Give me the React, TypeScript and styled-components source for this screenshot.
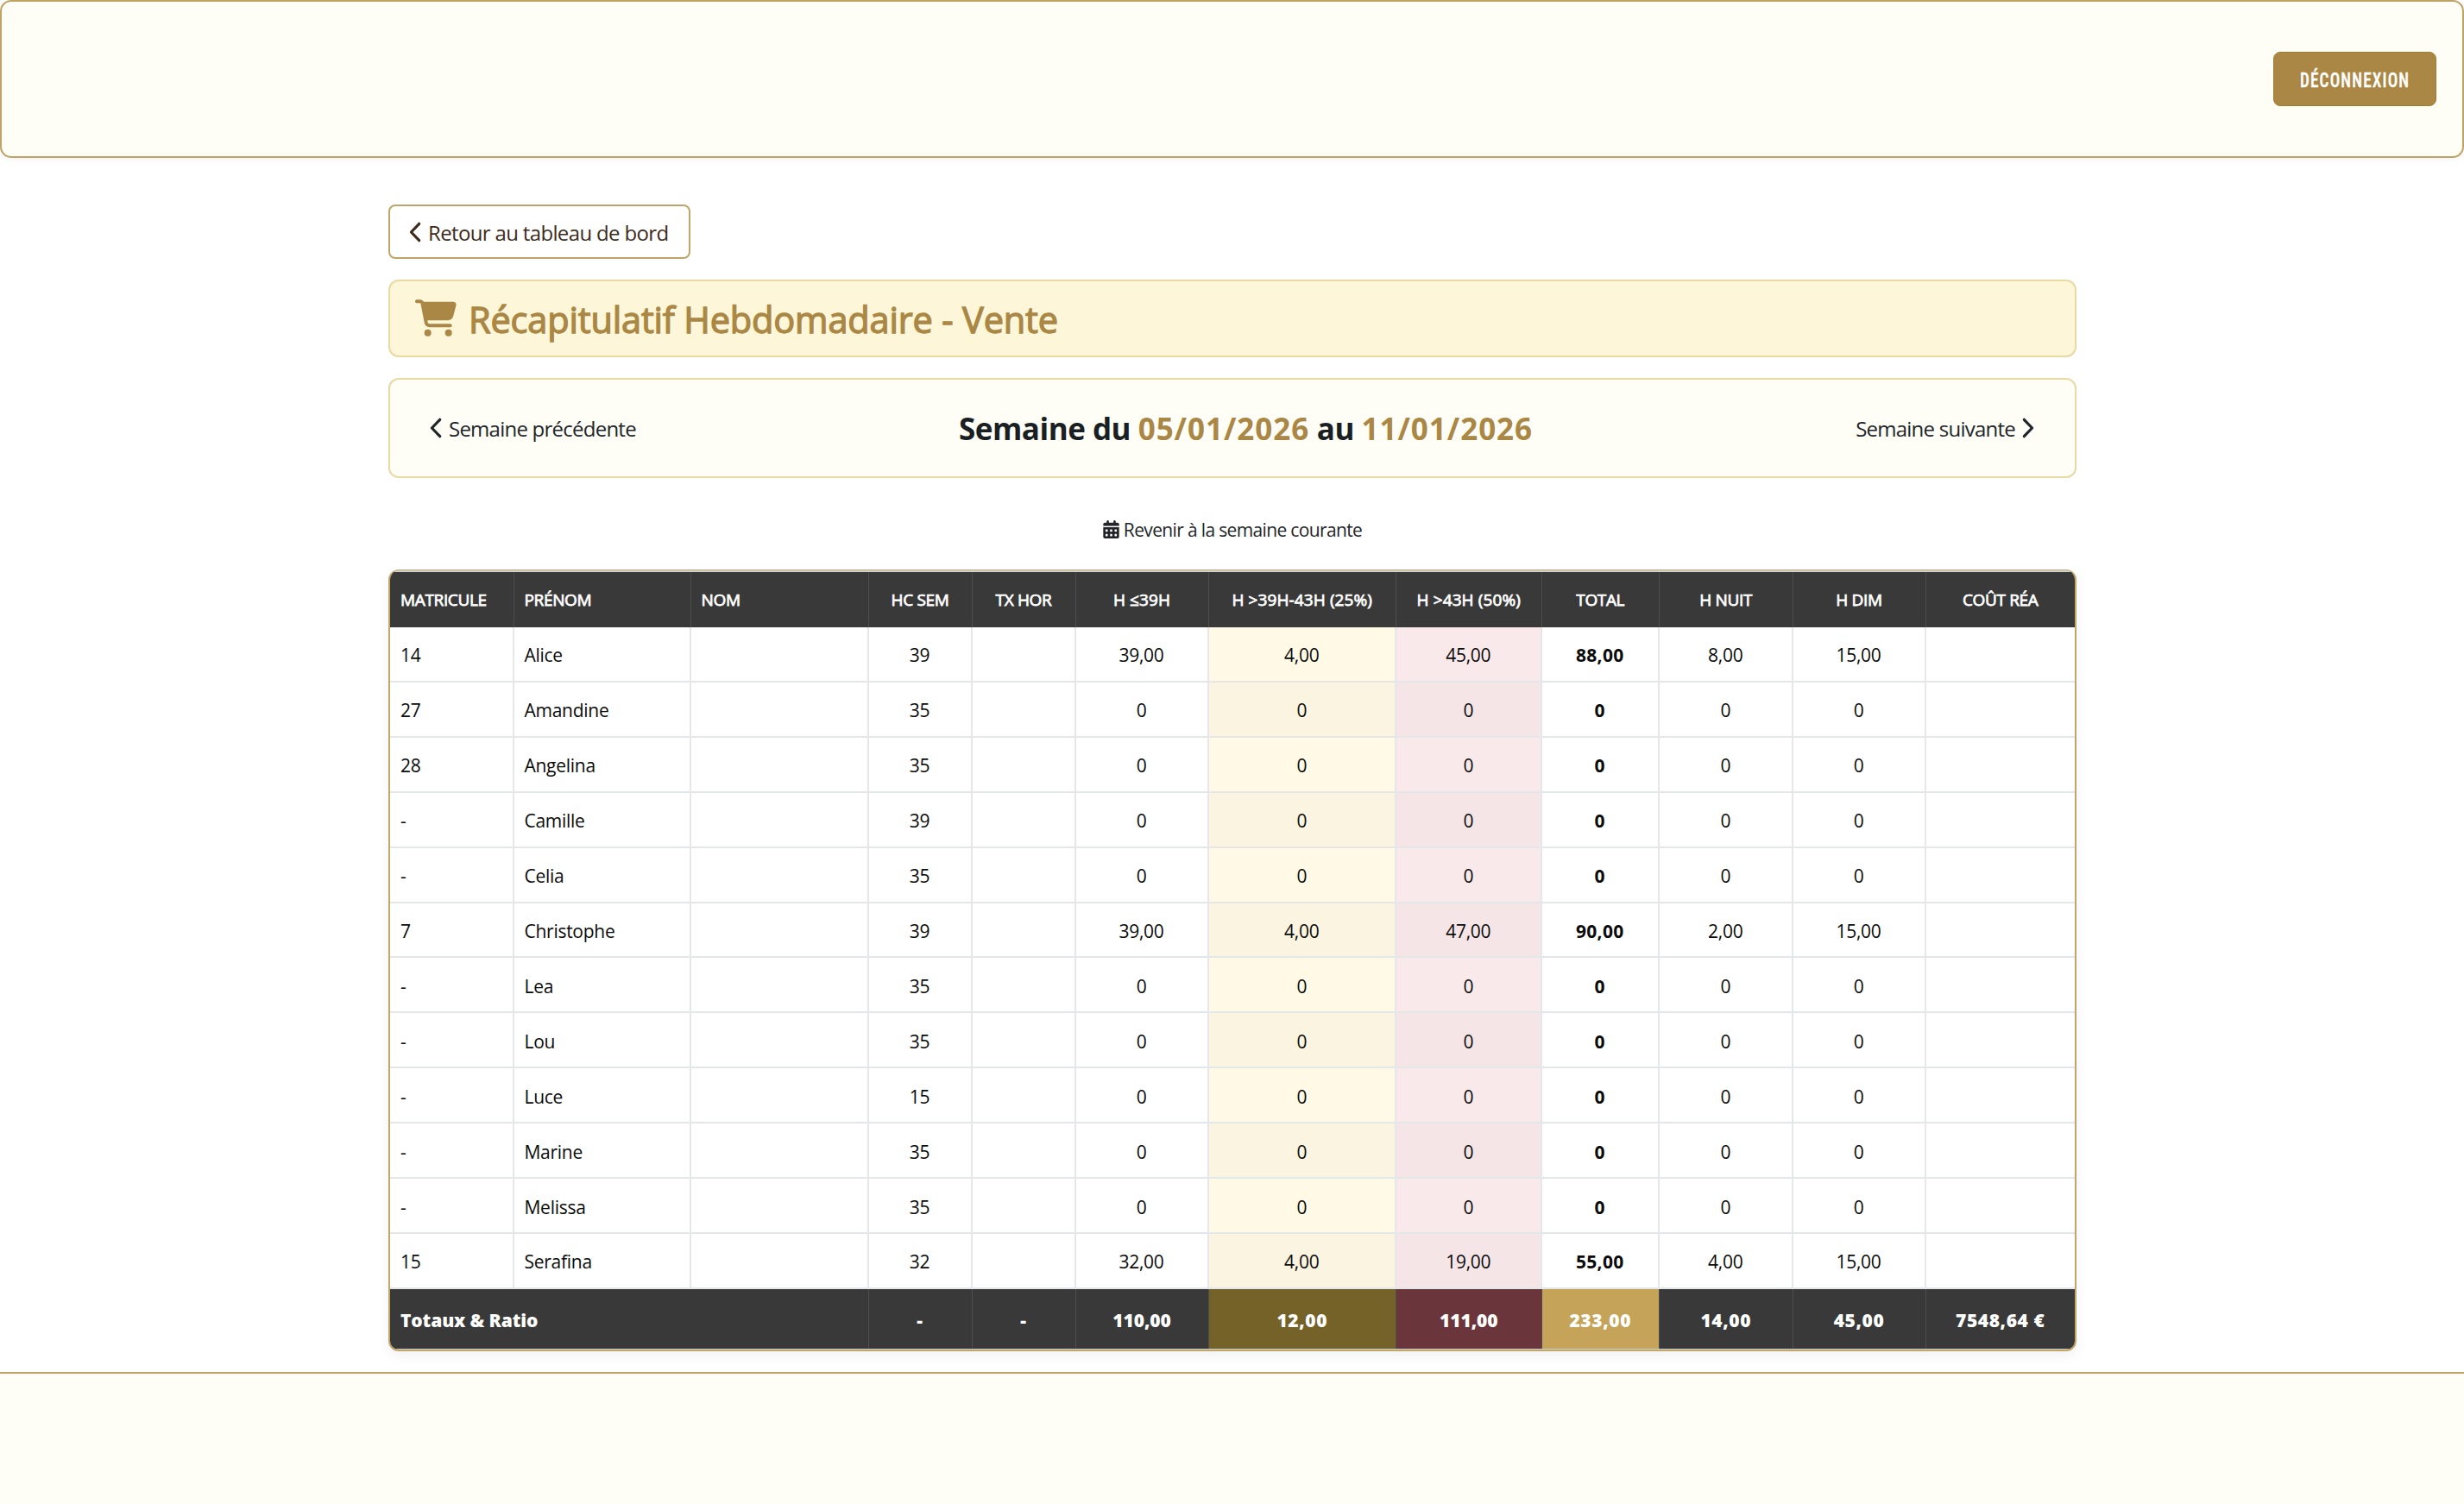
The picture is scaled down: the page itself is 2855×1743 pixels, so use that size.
import React from 'react';
import styled, { createGlobalStyle, css } from 'styled-components';
import { FaCartShopping, FaCalendarDays } from 'react-icons/fa6';

const GlobalStyle = createGlobalStyle`
  * { box-sizing: border-box; }
  html, body { margin: 0; background: #ffffff; }
  body { font-family: 'Open Sans', 'Noto Sans', sans-serif; color: #212529; }
`;

const Page = styled.div`
  display: flex;
  flex-direction: column;
  height: 1743px;
  overflow: hidden;
`;

const Header = styled.header`
  display: flex;
  flex: none;
  align-items: center;
  justify-content: flex-end;
  height: 183px;
  padding-right: 30px;
  background: #fefdf6;
  border: 2px solid #bfa364;
  border-radius: 13px;
  box-shadow: 0 2px 10px rgba(0, 0, 0, 0.05);
`;

const LogoutButton = styled.button`
  display: flex;
  align-items: center;
  justify-content: center;
  width: 189px;
  height: 63px;
  padding: 4px 0 0;
  color: #ffffff;
  background: #aa8744;
  border: 1px solid #a17c36;
  border-radius: 8px;
  font: 500 23px 'Roboto Condensed', Roboto, sans-serif;
`;

const LogoutLabel = styled.span`
  letter-spacing: 1.4px;
  transform: scaleX(0.83);
  -webkit-text-stroke: 0.4px currentColor;
`;

const Main = styled.main`
  display: flex;
  flex: none;
  flex-direction: column;
  align-items: stretch;
  width: 1956px;
  margin: 54px auto 0 450px;
`;

const BackButton = styled.a`
  display: flex;
  align-items: center;
  gap: 8px;
  width: 350px;
  height: 63px;
  padding-left: 22px;
  padding-top: 2px;
  color: #3d2c1c;
  border: 2px solid #bfa56a;
  border-radius: 8px;
  font-size: 24px;
  letter-spacing: -0.65px;
  white-space: nowrap;
`;

const TitleBar = styled.h1`
  display: flex;
  align-items: center;
  gap: 14px;
  height: 90px;
  margin: 24px 0;
  padding: 0 29px;
  color: #aa8744;
  background: #fdf6d9;
  border: 2px solid #e9d9a3;
  border-radius: 12px;
  font-size: 41.5px;
  font-weight: 400;
  letter-spacing: -0.16px;
  white-space: nowrap;
`;

const TitleText = styled.span`
  padding-top: 1px;
  -webkit-text-stroke: 1.3px currentColor;
`;

const CartIcon = styled(FaCartShopping)`
  width: 48px;
  height: 43px;
  margin-bottom: 2px;
`;

const WeekNav = styled.nav`
  display: flex;
  align-items: center;
  justify-content: space-between;
  height: 116px;
  padding: 0 47px 0 46px;
  background: #fefdf6;
  border: 2px solid #e9d9a3;
  border-radius: 12px;
`;

const WeekLink = styled.a`
  display: flex;
  align-items: center;
  gap: 8px;
  font-size: 24px;
  letter-spacing: -0.76px;
  white-space: nowrap;
`;

const ChevronIcon = styled.svg`
  width: 14px;
  height: 24px;
  margin-bottom: 1px;
  fill: none;
  stroke: currentColor;
  stroke-width: 3.2;
  stroke-linecap: round;
  stroke-linejoin: round;
`;

const WeekRange = styled.h2`
  margin: 0;
  color: #1a1f24;
  font-size: 35px;
  font-weight: 700;
  letter-spacing: -0.5px;
  white-space: nowrap;
`;

const WeekDate = styled.span`
  color: #aa8744;
  letter-spacing: 0.95px;
`;

const CurrentWeek = styled.a`
  display: flex;
  align-items: center;
  align-self: center;
  gap: 5px;
  height: 30px;
  margin: 45px 0 31px;
  font-size: 21px;
  letter-spacing: -0.65px;
  white-space: nowrap;
`;

const CalendarIcon = styled(FaCalendarDays)`
  width: 19px;
  height: 21px;
  margin-bottom: 2px;
`;

const TableCard = styled.div`
  display: flex;
  flex-direction: column;
  height: 906px;
  overflow: hidden;
  background: #cdd1d3;
  border: 2px solid #c0a668;
  border-top-width: 1px;
  border-radius: 12px;
  box-shadow: 0 5px 15px rgba(0, 0, 0, 0.06);
`;

const columns = '143.5px 205px 206px 120px 120px 154px 217.5px 168.5px 136.5px 154.5px 154px 172.5px';

const Row = styled.div`
  display: grid;
  flex: none;
  grid-template-columns: ${columns};
`;

const HeadRow = styled(Row)`
  height: 64px;
  margin-top: 2px;
  color: #ffffff;
  background: #393939;
`;

const TotalRow = styled(Row)`
  height: 69px;
  color: #ffffff;
  background: #393939;
`;

const BodyRow = styled(Row)`
  height: 63.92px;
  background: #ffffff;
`;

type Tone = 'yellow' | 'pink' | 'gold' | undefined;

const cellBase = css<{ $left?: boolean }>`
  display: flex;
  align-items: center;
  justify-content: ${(p) => (p.$left ? 'flex-start' : 'center')};
  min-width: 0;
  padding: 0 12px;
  white-space: nowrap;
`;

const HeadCell = styled.div<{ $left?: boolean; $wide?: boolean }>`
  ${cellBase}
  border-right: 1px solid #4d4e50;
  font-size: 19px;
  letter-spacing: ${(p) => (p.$wide ? '0.1px' : '-0.35px')};
  -webkit-text-stroke: 0.75px currentColor;
  &:last-child { border-right: 0; }
`;

const bodyTones: Record<string, [string, string]> = {
  yellow: ['#fff9e6', '#fbf4e1'],
  pink: ['#fae9eb', '#f5e5e7'],
};

const BodyCell = styled.div<{ $left?: boolean; $tone?: Tone; $even?: boolean; $strong?: boolean }>`
  ${cellBase}
  padding-top: 3px;
  color: #0b0b0b;
  background: ${(p) => (p.$tone ? bodyTones[p.$tone][p.$even ? 1 : 0] : 'transparent')};
  border-right: 2px solid #e6e7ea;
  border-bottom: 2px solid #e4e7ea;
  font-size: 21px;
  font-weight: ${(p) => (p.$strong ? 700 : 400)};
  letter-spacing: ${(p) => (p.$strong ? '0.3px' : '-0.27px')};
  &:last-child { border-right: 0; }
`;

const totalTones: Record<string, string> = {
  yellow: '#756229',
  pink: '#6a363b',
  gold: '#c5a358',
};

const TotalCell = styled.div<{ $left?: boolean; $tone?: Tone; $span?: number; $tight?: boolean }>`
  ${cellBase}
  grid-column: span ${(p) => p.$span ?? 1};
  padding-top: 3px;
  background: ${(p) => (p.$tone ? totalTones[p.$tone] : 'transparent')};
  border-right: 1px solid #4d4e50;
  font-size: 21px;
  font-weight: 800;
  letter-spacing: ${(p) => (p.$tight ? '-0.1px' : '0.6px')};
  &:last-child { border-right: 0; }
`;

const Footer = styled.footer`
  flex: none;
  height: 154px;
  margin-top: 24px;
  background: #fefdf6;
  border-top: 2px solid #c0a468;
`;

const Chevron = ({ right }: { right?: boolean }) => (
  <ChevronIcon viewBox="0 0 14 24">
    <path d={right ? 'M2.3 2.3 L11.6 12 L2.3 21.7' : 'M11.7 2.3 L2.4 12 L11.7 21.7'} />
  </ChevronIcon>
);

const headings = [
  'MATRICULE', 'PRÉNOM', 'NOM', 'HC SEM', 'TX HOR', 'H ≤39H',
  'H >39H-43H (25%)', 'H >43H (50%)', 'TOTAL', 'H NUIT', 'H DIM', 'COÛT RÉA',
];

const zeros = ['0', '0', '0', '0', '0', '0'];

const staff: { id: string; name: string; hours: string; values: string[] }[] = [
  { id: '14', name: 'Alice', hours: '39', values: ['39,00', '4,00', '45,00', '88,00', '8,00', '15,00'] },
  { id: '27', name: 'Amandine', hours: '35', values: zeros },
  { id: '28', name: 'Angelina', hours: '35', values: zeros },
  { id: '-', name: 'Camille', hours: '39', values: zeros },
  { id: '-', name: 'Celia', hours: '35', values: zeros },
  { id: '7', name: 'Christophe', hours: '39', values: ['39,00', '4,00', '47,00', '90,00', '2,00', '15,00'] },
  { id: '-', name: 'Lea', hours: '35', values: zeros },
  { id: '-', name: 'Lou', hours: '35', values: zeros },
  { id: '-', name: 'Luce', hours: '15', values: zeros },
  { id: '-', name: 'Marine', hours: '35', values: zeros },
  { id: '-', name: 'Melissa', hours: '35', values: zeros },
  { id: '15', name: 'Serafina', hours: '32', values: ['32,00', '4,00', '19,00', '55,00', '4,00', '15,00'] },
];

const valueTones: Tone[] = [undefined, 'yellow', 'pink'];

const totals: { text: string; tone?: Tone; tight?: boolean }[] = [
  { text: '-' },
  { text: '-' },
  { text: '110,00', tight: true },
  { text: '12,00', tone: 'yellow' },
  { text: '111,00', tone: 'pink', tight: true },
  { text: '233,00', tone: 'gold' },
  { text: '14,00' },
  { text: '45,00' },
  { text: '7548,64 €' },
];

export default function App() {
  return (
    <>
      <GlobalStyle />
      <Page>
        <Header>
          <LogoutButton>
            <LogoutLabel>DÉCONNEXION</LogoutLabel>
          </LogoutButton>
        </Header>
        <Main>
          <BackButton>
            <Chevron />
            Retour au tableau de bord
          </BackButton>
          <TitleBar>
            <CartIcon />
            <TitleText>Récapitulatif Hebdomadaire - Vente</TitleText>
          </TitleBar>
          <WeekNav>
            <WeekLink>
              <Chevron />
              Semaine précédente
            </WeekLink>
            <WeekRange>
              Semaine du <WeekDate>05/01/2026</WeekDate> au <WeekDate>11/01/2026</WeekDate>
            </WeekRange>
            <WeekLink>
              Semaine suivante
              <Chevron right />
            </WeekLink>
          </WeekNav>
          <CurrentWeek>
            <CalendarIcon />
            Revenir à la semaine courante
          </CurrentWeek>
          <TableCard>
            <HeadRow>
              {headings.map((label, i) => (
                <HeadCell key={label} $left={i < 3} $wide={/[≤>]/.test(label)}>{label}</HeadCell>
              ))}
            </HeadRow>
            {staff.map((person, r) => (
              <BodyRow key={person.name}>
                <BodyCell $left>{person.id}</BodyCell>
                <BodyCell $left>{person.name}</BodyCell>
                <BodyCell />
                <BodyCell>{person.hours}</BodyCell>
                <BodyCell />
                {person.values.map((value, i) => (
                  <BodyCell key={i} $tone={valueTones[i]} $even={r % 2 === 1} $strong={i === 3}>
                    {value}
                  </BodyCell>
                ))}
                <BodyCell />
              </BodyRow>
            ))}
            <TotalRow>
              <TotalCell $left $span={3} $tight>Totaux &amp; Ratio</TotalCell>
              {totals.map((total, i) => (
                <TotalCell key={i} $tone={total.tone} $tight={total.tight}>{total.text}</TotalCell>
              ))}
            </TotalRow>
          </TableCard>
        </Main>
        <Footer />
      </Page>
    </>
  );
}
